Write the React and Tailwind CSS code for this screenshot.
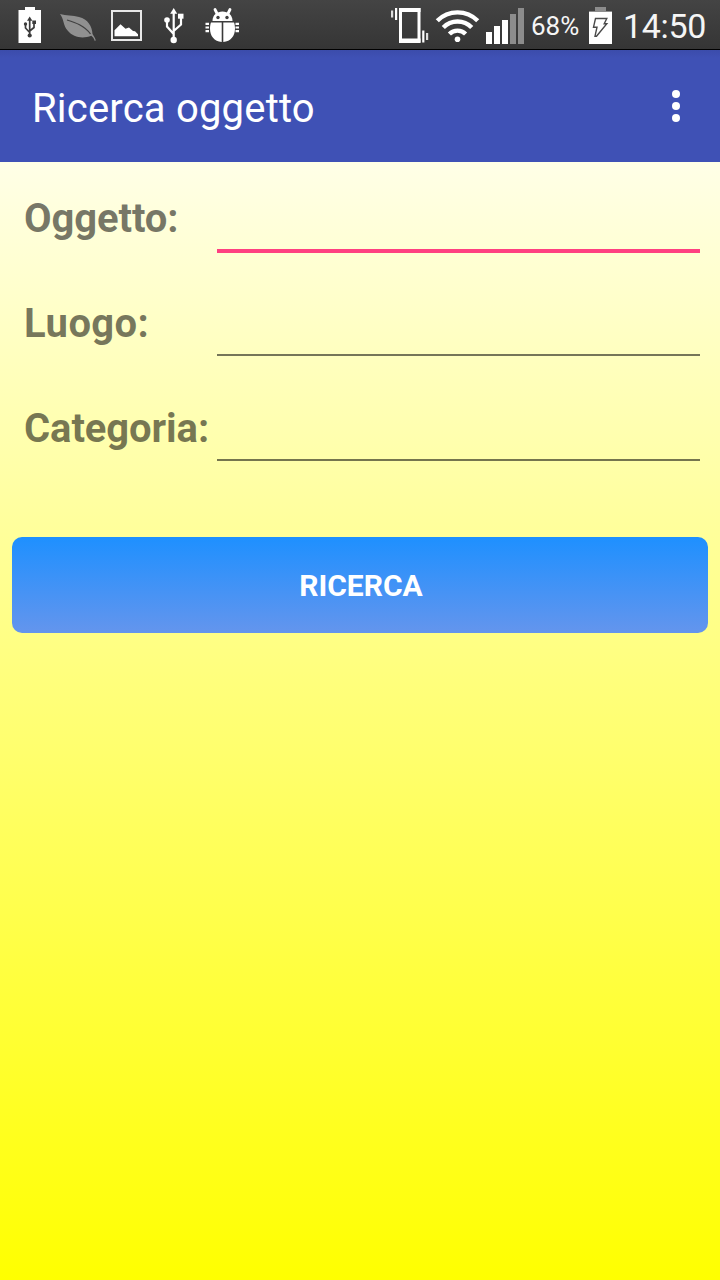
const fields = [
  { label: 'Oggetto:', active: true, tracking: 'tracking-[-0.1px]' },
  { label: 'Luogo:', active: false, tracking: 'tracking-[0.4px]' },
  { label: 'Categoria:', active: false, tracking: 'tracking-[-0.1px]' },
];

function UsbBatteryIcon() {
  return (
    <svg className="ml-[18px] h-[37px] w-6 shrink-0" viewBox="18 7 24 37">
      <path d="M25 7h10v3h6v33H18.500V10H25z" fill="#fff" />
      <g fill="none" stroke="#3c3c3c" strokeWidth="1.700">
        <path d="M29.700 19v17M25.500 24v4l4.200 4.500M34 22.500v5l-4.300 3.500" />
      </g>
      <g fill="#3c3c3c">
        <path d="M29.700 16.500l2.700 4.200h-5.400z" />
        <circle cx="29.700" cy="35.500" r="2.100" />
        <circle cx="25.500" cy="24" r="1.700" />
        <path d="M32.300 20.500h3.700v3.500h-3.700z" />
      </g>
    </svg>
  );
}

function LeafIcon() {
  return (
    <svg className="ml-[17px] mt-1 h-8 w-[38px] shrink-0" viewBox="59 11 38 32">
      <path d="M60 14c6 2 13 1 19 3c9 2.500 13 9 13.500 17c1 1.500 2 3 3.300 6.200l-1 .8c-.8-2.500-2-4-3.500-5.200c-8 3-18 2-23.500-5C63 25.500 64 19 60 14z" fill="#909090" />
      <path d="M67 20c8 2.500 17.500 5.500 23.500 14" fill="none" stroke="#404040" strokeWidth="1.300" />
    </svg>
  );
}

function PictureIcon() {
  return (
    <svg className="ml-[13px] mt-[2px] h-8 w-8 shrink-0" viewBox="110 9 32 32">
      <rect x="112" y="11" width="29" height="29" fill="none" stroke="#e8e8e8" strokeWidth="2" />
      <path d="M114.500 36.300v-6l6-6 5 4.500 3.500-1.300 4 3.500 2 .3 3 3v2z" fill="#fff" />
    </svg>
  );
}

function UsbIcon() {
  return (
    <svg className="ml-[22px] mt-px h-9 w-5 shrink-0" viewBox="164 8 20 36">
      <path d="M173.700 11v29M167 20v6.500l6.700 7.500M181 16v8.500l-7.300 6.500" fill="none" stroke="#fff" strokeWidth="2.200" />
      <g fill="#fff">
        <path d="M173.700 8l3.500 5.700h-7z" />
        <circle cx="167" cy="20" r="2.800" />
        <path d="M178 13.700h5.500v5H178z" />
        <circle cx="173.700" cy="40" r="3.200" />
      </g>
    </svg>
  );
}

function DebugIcon() {
  return (
    <svg className="ml-[21px] h-9 w-9 shrink-0" viewBox="205 7 36 36">
      <g fill="none" stroke="#fff">
        <path d="M215 9.500l2 4M230 9.500l-2 4" strokeWidth="2.800" strokeLinecap="round" />
        <path d="M205.500 23.800h3.500M205.500 27.500h3.500M205.500 31.200h3.500M235.500 23.800h3.500M235.500 27.500h3.500M235.500 31.200h3.500" strokeWidth="2.200" />
      </g>
      <path d="M212.500 21c0-6 4.500-9.500 10-9.500s10 3.500 10 9.500z" fill="#fff" />
      <path d="M211 22.500h10.700V42c-7.500-.7-11.700-6-11.700-13.500c0-2 .3-4.300 1-6zM223.300 22.500h10.700c.7 1.700 1 4 1 6c0 7.500-4.300 12.800-11.700 13.500z" fill="#fff" />
      <circle cx="218" cy="17.500" r="1.700" fill="#3e3e3e" />
      <circle cx="227" cy="17.500" r="1.700" fill="#3e3e3e" />
    </svg>
  );
}

function VibrateIcon() {
  return (
    <svg className="ml-auto mt-px h-9 w-10 shrink-0" viewBox="390 8 40 36">
      <rect x="400.500" y="9.500" width="18.500" height="31.500" fill="none" stroke="#fff" strokeWidth="3" />
      <path d="M399 8h21.500v4H399zM399 38.500h21.500V43H399zM395 8h2.200v12H395zM422.200 30.500h2.200v12h-2.200z" fill="#fff" />
      <path d="M391 10.500h2.200v7H391zM426 33h2.200v7H426z" fill="#ddd" />
    </svg>
  );
}

function WifiIcon() {
  return (
    <svg className="ml-[5px] mt-px h-9 w-[45px] shrink-0" viewBox="435 8 45 36">
      <g fill="none" stroke="#fff" strokeWidth="4.400">
        <path d="M437.300 20.800a28.500 28.500 0 0 1 40.400 0" />
        <path d="M443.300 27.500a19.800 19.800 0 0 1 28.400 0" />
        <path d="M449.400 34a11.400 11.400 0 0 1 16.200 0" />
      </g>
      <circle cx="457.500" cy="39.300" r="2.800" fill="#fff" />
    </svg>
  );
}

function SignalIcon() {
  return (
    <svg className="ml-[6px] mt-px h-9 w-[38px] shrink-0" viewBox="486 8 38 36">
      <path d="M486 32h6v12h-6zM494 26h6v18h-6zM502 20h6v24h-6z" fill="#fff" />
      <path d="M510 14h6v30h-6zM518 8h6v36h-6z" fill="#8c8c8c" />
    </svg>
  );
}

function ChargingIcon() {
  return (
    <svg className="ml-[9px] h-[37px] w-6 shrink-0" viewBox="589 7 24 37">
      <path d="M595 7h11v4h6v2h-23v-2h6z" fill="#8c8c8c" />
      <path d="M589 12h23v32h-23z" fill="#fff" />
      <path d="M595.500 18.500h11.300l-2.600 5.200h2.600l-10.300 12.500h-1.500l2-9h-3.500z" fill="none" stroke="#4a4a4a" strokeWidth="1.400" />
    </svg>
  );
}

function StatusBar() {
  return (
    <div className="flex h-[50px] items-start border-b border-black bg-linear-to-b/srgb from-[#444] to-[#353535] pt-[7px] text-[#f5f5f5]">
      <UsbBatteryIcon />
      <LeafIcon />
      <PictureIcon />
      <UsbIcon />
      <DebugIcon />
      <VibrateIcon />
      <WifiIcon />
      <SignalIcon />
      <span className="ml-[7px] w-[49px] whitespace-nowrap text-[26px] leading-[38px]">68%</span>
      <ChargingIcon />
      <span className="ml-[10px] w-[97px] whitespace-nowrap text-[34px] leading-[38px] tracking-[-0.3px]">14:50</span>
    </div>
  );
}

function AppBar() {
  return (
    <header className="flex h-28 items-center justify-between bg-[#3f51b5] bg-linear-to-b/srgb from-[#3b4cab] to-[#3f51b5] to-[8px] pl-8 pr-10 text-white">
      <h1 className="pt-1.5 text-[40px] leading-[48px] tracking-[0.2px]">Ricerca oggetto</h1>
      <button className="flex flex-col gap-1" aria-label="Menu">
        <span className="size-2 rounded-full bg-white" />
        <span className="size-2 rounded-full bg-white" />
        <span className="size-2 rounded-full bg-white" />
      </button>
    </header>
  );
}

function Field({ label, active, tracking }) {
  return (
    <label className="flex h-[105px] items-start pl-6 pr-5">
      <span className={`w-[193px] shrink-0 whitespace-nowrap pt-[33px] text-[40px] font-bold leading-[48px] text-black/54 ${tracking}`}>
        {label}
      </span>
      <span className={`flex flex-1 flex-col ${active ? 'h-[91px]' : 'h-[89px]'}`}>
        <input className="min-h-0 w-full flex-1 bg-transparent outline-none" />
        <span className={active ? 'h-1 bg-[#ff4081]' : 'h-0.5 bg-black/54'} />
      </span>
    </label>
  );
}

export default function App() {
  return (
    <div className="flex h-[1280px] w-[720px] flex-col overflow-hidden font-['Roboto',sans-serif]">
      <StatusBar />
      <AppBar />
      <main className="flex-1 bg-linear-to-b/srgb from-[#ffffe7] to-[#ffff00]">
        {fields.map((field) => (
          <Field key={field.label} {...field} />
        ))}
        <div className="px-3 pt-[60px]">
          <button className="h-24 w-full rounded-[10px] bg-linear-to-b/srgb from-[#1e90ff] to-[#6495ed] pl-0.5 text-[30px] font-bold text-white">
            RICERCA
          </button>
        </div>
      </main>
    </div>
  );
}
